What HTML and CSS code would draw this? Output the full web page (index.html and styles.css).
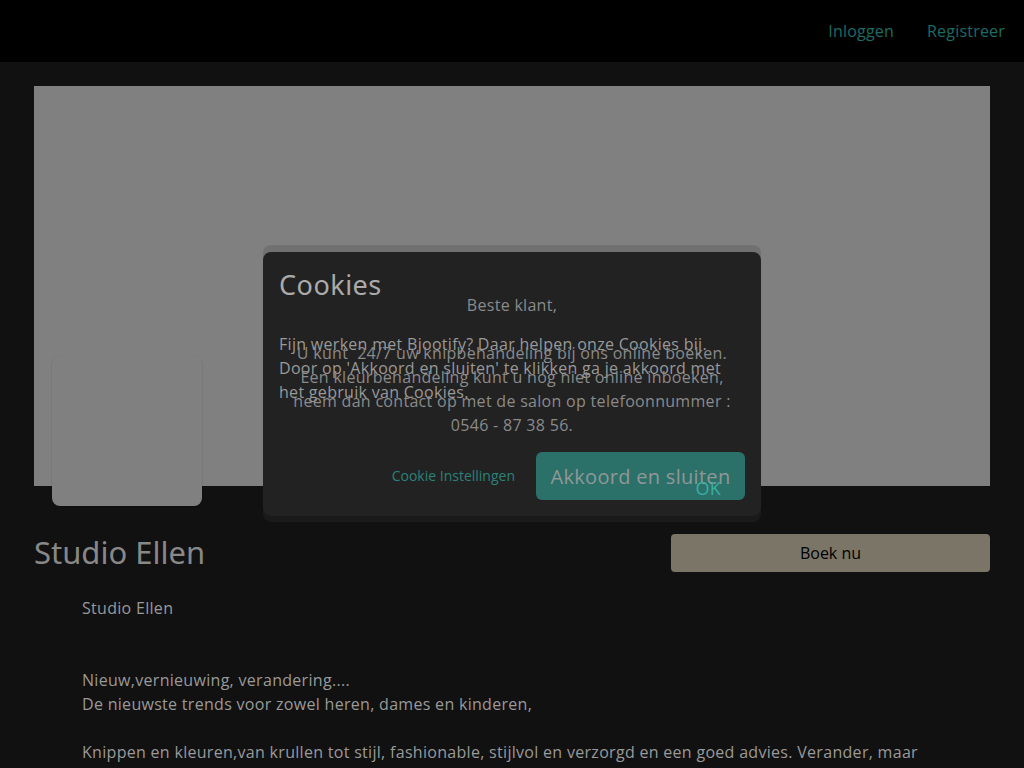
FILE: index.html
```
<!DOCTYPE html>
<html lang="nl">
<head>
  <meta charset="UTF-8">
  <title>Studio Ellen</title>
  <link rel="stylesheet" href="styles.css">
</head>
<body>
  <header class="topbar">
    <a href="#" class="topbar-link">Inloggen</a>
    <a href="#" class="topbar-link">Registreer</a>
  </header>

  <main class="salon">
    <div class="banner">
      <div class="avatar"></div>
    </div>

    <div class="salon-head">
      <h1 class="salon-name">Studio Ellen</h1>
      <button class="book-btn">Boek nu</button>
    </div>

    <div class="salon-text">
      <p>Studio Ellen</p>
      <p><br><br></p>
      <p>Nieuw,vernieuwing, verandering....<br>De nieuwste trends voor zowel heren, dames en kinderen,</p>
      <p><br></p>
      <p>Knippen en kleuren,van krullen tot stijl, fashionable, stijlvol en verzorgd en een goed advies. Verander, maar blijf jezelf.</p>
    </div>
  </main>

  <div class="modal">
    <div class="cookie-panel">
      <h2 class="cookie-title">Cookies</h2>
      <p class="cookie-text">Fijn werken met Bjootify? Daar helpen onze Cookies bij. Door op 'Akkoord en sluiten' te klikken ga je akkoord met het gebruik van Cookies.</p>
      <div class="cookie-actions">
        <a href="#" class="cookie-settings">Cookie Instellingen</a>
        <button class="cookie-accept">Akkoord en sluiten</button>
      </div>
    </div>
    <div class="notice">
      <p>Beste klant,</p>
      <p class="notice-body">U kunt &nbsp;24/7 uw knipbehandeling bij ons online boeken.<br>Een kleurbehandeling kunt u nog niet online inboeken,<br>neem dan contact op met de salon op telefoonnummer :<br>0546 - 87 38 56.</p>
      <div class="notice-actions"><a href="#" class="notice-ok">OK</a></div>
    </div>
  </div>
</body>
</html>
```

FILE: styles.css
```
body {
  margin: 0;
  background-color: #111;
  color: #999;
  font-family: "Open Sans", sans-serif;
  font-size: 16px;
  letter-spacing: 0.3px;
  line-height: 24px;
  overflow: hidden;
  height: 768px;
}
p {
  margin: 0;
}

.topbar {
  height: 62px;
  background-color: #000;
  display: flex;
  justify-content: flex-end;
  align-items: center;
  gap: 33px;
  padding-right: 19px;
}
.topbar-link {
  color: #1d6b64;
  text-decoration: none;
  font-size: 16px;
  letter-spacing: 0.2px;
}

.salon {
  padding: 24px 34px 0;
}
.banner {
  height: 400px;
  background-color: #808080;
  position: relative;
}
.avatar {
  position: absolute;
  left: 18px;
  top: 270px;
  width: 150px;
  height: 150px;
  background-color: #808080;
  border-radius: 8px;
  box-shadow: 0 1px 2px rgba(0, 0, 0, 0.2);
}

.salon-head {
  display: flex;
  justify-content: space-between;
  align-items: flex-start;
  margin-top: 48px;
}
.salon-name {
  margin: 0;
  font-family: "Noto Sans", sans-serif;
  font-weight: 400;
  font-size: 31px;
  letter-spacing: 0;
  line-height: 36px;
  color: #888;
}
.book-btn {
  width: 319px;
  height: 38px;
  border: none;
  border-radius: 4px;
  background-color: #7a7566;
  color: #000;
  font-family: "Open Sans", sans-serif;
  font-size: 16px;
}

.salon-text {
  padding: 24px 48px 0;
}

.modal {
  position: absolute;
  left: 263px;
  top: 245px;
  width: 498px;
  height: 277px;
  border-radius: 8px;
  background-color: rgba(57, 57, 57, 0.22);
}
.cookie-panel {
  position: absolute;
  top: 7px;
  left: 0;
  right: 0;
  bottom: 6px;
  background-color: #222;
  border-radius: 8px;
  padding: 16px 16px 0;
}
.cookie-title {
  margin: 0;
  font-family: "Noto Sans", sans-serif;
  font-weight: 400;
  font-size: 27px;
  letter-spacing: 0.5px;
  line-height: 34px;
  color: #aaa;
}
.cookie-text {
  margin-top: 30px;
  color: #999;
}
.cookie-actions {
  display: flex;
  justify-content: flex-end;
  align-items: center;
  gap: 21px;
  margin-top: 48px;
}
.cookie-settings {
  color: #2a8278;
  font-size: 14px;
  letter-spacing: 0;
  text-decoration: none;
}
.cookie-accept {
  width: 209px;
  height: 48px;
  border: none;
  border-radius: 6px;
  background-color: #2b7069;
  color: #909896;
  font-family: "Open Sans", sans-serif;
  font-size: 20px;
  letter-spacing: 0.3px;
}

.notice {
  position: relative;
  padding-top: 48px;
  text-align: center;
  color: #8a8a8a;
}
.notice-body {
  margin-top: 24px;
}
.notice-actions {
  text-align: right;
  padding-right: 40px;
  margin-top: 39px;
}
.notice-ok {
  color: #3aaea3;
  font-size: 18px;
  text-decoration: none;
}
```
